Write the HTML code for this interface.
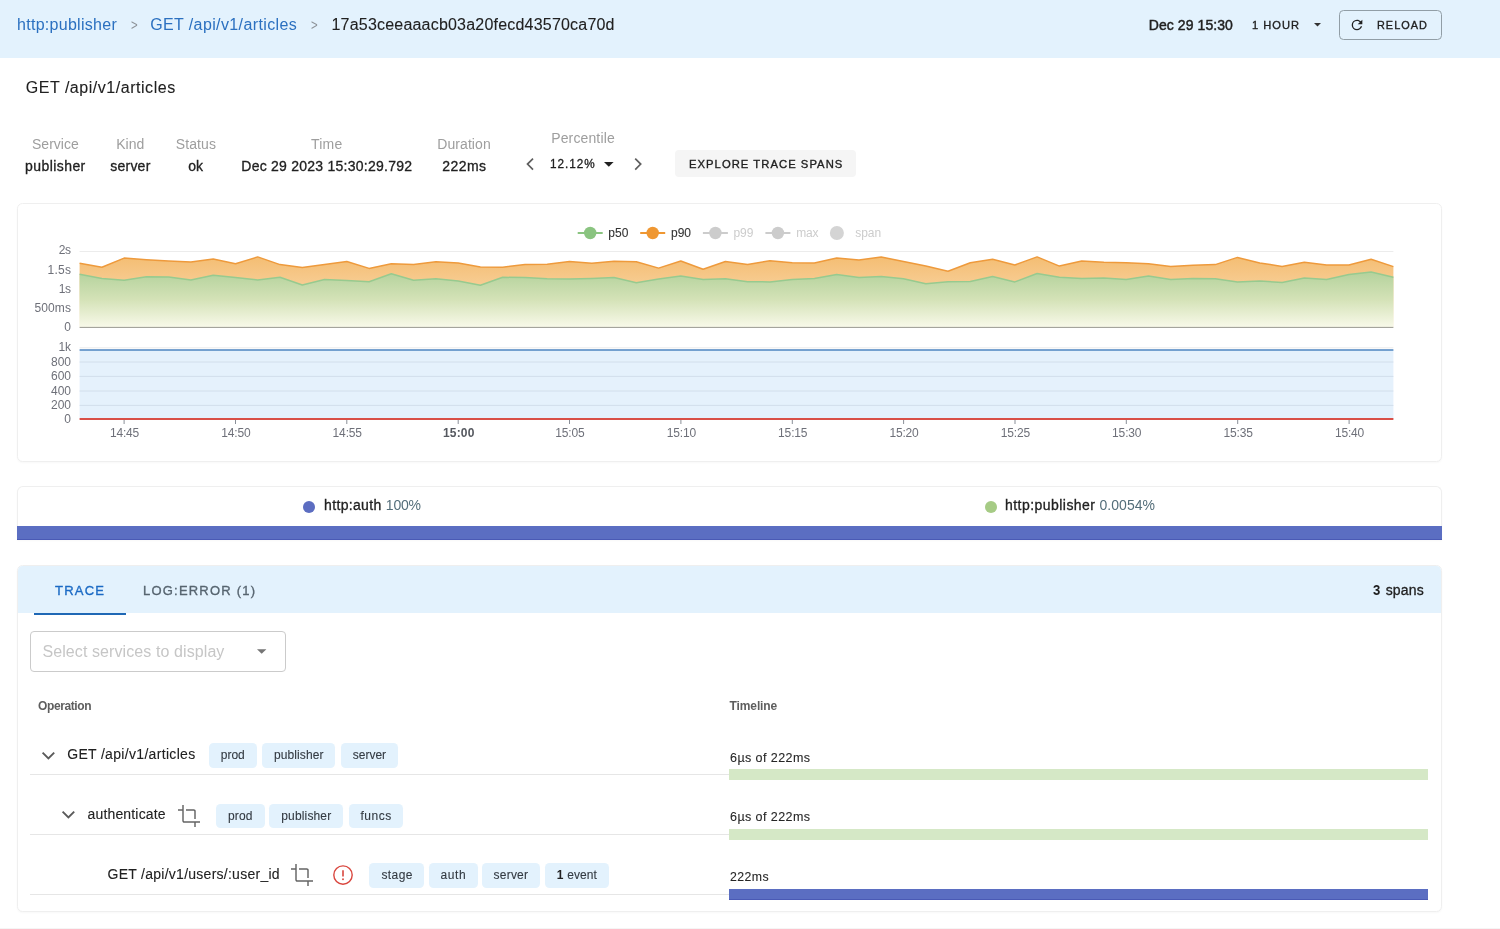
<!DOCTYPE html>
<html lang="en"><head><meta charset="utf-8"><title>Trace</title>
<style>
html,body{margin:0;padding:0;background:#fff;}
body{width:1500px;height:929px;position:relative;overflow:hidden;font-family:"Liberation Sans", sans-serif;}
.t{position:absolute;white-space:pre;}
.abs{position:absolute;}
.card{position:absolute;border:1px solid #efefef;border-radius:5.5px;box-sizing:border-box;background:#fff;box-shadow:0 1px 2px rgba(0,0,0,.03);}
.chip{position:absolute;height:24.7px;border-radius:4.5px;background:#e3f2fd;}
svg{position:absolute;overflow:visible}
</style></head><body><div id="root" style="position:absolute;left:0;top:0;width:1500px;height:929px;will-change:transform">
<div class="abs" style="left:0;top:0;width:1500px;height:57.5px;background:#e3f2fd"></div>
<!-- 1 hour caret -->
<svg style="left:1314.4px;top:23.1px" width="7" height="3.5" viewBox="0 0 10 5"><path d="M0 0h10L5 5z" fill="#333"/></svg>
<!-- reload button -->
<div class="abs" style="left:1339px;top:10px;width:102.5px;height:29.5px;box-sizing:border-box;border:1px solid #919ea6;border-radius:4.5px"></div>
<svg style="left:1349.3px;top:16.5px" width="16" height="16" viewBox="0 0 24 24"><path fill="#212121" d="M17.65,6.35C16.2,4.9 14.21,4 12,4A8,8 0 0,0 4,12A8,8 0 0,0 12,20C15.73,20 18.84,17.45 19.73,14H17.65C16.83,16.33 14.61,18 12,18A6,6 0 0,1 6,12A6,6 0 0,1 12,6C13.66,6 15.14,6.69 16.22,7.78L13,11H20V4L17.65,6.35Z"/></svg>
<!-- percentile chevrons -->
<svg style="left:525.9px;top:157.9px" width="8" height="12" viewBox="0 0 8 12"><path d="M7 0.6L1.5 6.1l5.5 5.5" fill="none" stroke="#5f5f5f" stroke-width="1.7"/></svg>
<svg style="left:633.7px;top:157.9px" width="8" height="12" viewBox="0 0 8 12"><path d="M1.2 0.6l5.5 5.5-5.5 5.5" fill="none" stroke="#5f5f5f" stroke-width="1.7"/></svg>
<svg style="left:604.3px;top:161.9px" width="9.6" height="4.8" viewBox="0 0 10 5"><path d="M0 0h10L5 5z" fill="#212121"/></svg>
<div class="abs" style="left:674.7px;top:150px;width:181.3px;height:27.4px;background:#f5f5f5;border-radius:4px"></div>
<!-- chart card -->
<div class="card" style="left:17px;top:203px;width:1424.5px;height:258.5px"></div>
<svg style="left:0;top:0" width="1500" height="470" viewBox="0 0 1500 470">
<defs><linearGradient id="go" x1="0" y1="256" x2="0" y2="327" gradientUnits="userSpaceOnUse"><stop offset="0" stop-color="#f4bd72"/><stop offset="0.5" stop-color="#f8d09a"/><stop offset="1" stop-color="#fdf1e0"/></linearGradient><linearGradient id="gg" x1="0" y1="272" x2="0" y2="327" gradientUnits="userSpaceOnUse"><stop offset="0" stop-color="#b4d29c"/><stop offset="0.5" stop-color="#d4e2b7"/><stop offset="1" stop-color="#f8f9e9"/></linearGradient></defs>
<path d="M79.6 251.5H1393.4" stroke="#ececec" stroke-width="1"/>
<path d="M79.6 347.8H1393.4" stroke="#ececec" stroke-width="1"/>
<polygon points="79.6,263.3 101.9,267.3 124.1,258.1 146.4,259.7 168.7,261.0 190.9,262.0 213.2,258.9 235.5,263.8 257.7,256.9 280.0,264.6 302.3,267.6 324.5,264.6 346.8,261.5 369.1,268.4 391.3,263.8 413.6,264.6 435.9,261.8 458.2,263.0 480.4,266.9 502.7,267.2 525.0,264.5 547.2,264.3 569.5,261.5 591.8,263.3 614.0,261.2 636.3,261.8 658.6,268.1 680.8,261.0 703.1,269.2 725.4,261.5 747.6,264.4 769.9,260.7 792.2,262.7 814.4,263.0 836.7,258.1 859.0,260.0 881.2,256.9 903.5,261.5 925.8,266.1 948.0,271.2 970.3,262.7 992.6,259.2 1014.8,265.0 1037.1,256.9 1059.4,266.1 1081.7,261.0 1103.9,262.3 1126.2,262.7 1148.5,263.8 1170.7,266.6 1193.0,265.3 1215.3,264.6 1237.5,257.4 1259.8,263.0 1282.1,266.4 1304.3,262.3 1326.6,265.0 1348.9,264.9 1371.1,259.2 1393.4,266.6 1393.4,327.2 79.6,327.2" fill="url(#go)"/>
<polygon points="79.6,274.2 101.9,278.4 124.1,280.2 146.4,276.8 168.7,277.1 190.9,279.9 213.2,275.3 235.5,277.6 257.7,279.9 280.0,277.3 302.3,285.0 324.5,279.6 346.8,280.4 369.1,281.7 391.3,273.8 413.6,280.2 435.9,278.7 458.2,281.1 480.4,285.3 502.7,277.3 525.0,277.6 547.2,278.8 569.5,279.1 591.8,278.4 614.0,277.6 636.3,282.7 658.6,279.1 680.8,276.1 703.1,279.4 725.4,278.8 747.6,281.7 769.9,281.9 792.2,279.4 814.4,278.4 836.7,274.5 859.0,277.6 881.2,276.4 903.5,278.8 925.8,283.7 948.0,281.7 970.3,281.4 992.6,276.4 1014.8,281.9 1037.1,273.5 1059.4,277.3 1081.7,278.4 1103.9,277.9 1126.2,279.6 1148.5,276.1 1170.7,279.4 1193.0,278.4 1215.3,278.8 1237.5,281.9 1259.8,281.1 1282.1,282.5 1304.3,278.1 1326.6,279.6 1348.9,274.5 1371.1,271.9 1393.4,277.3 1393.4,327.2 79.6,327.2" fill="url(#gg)"/>
<polyline points="79.6,263.3 101.9,267.3 124.1,258.1 146.4,259.7 168.7,261.0 190.9,262.0 213.2,258.9 235.5,263.8 257.7,256.9 280.0,264.6 302.3,267.6 324.5,264.6 346.8,261.5 369.1,268.4 391.3,263.8 413.6,264.6 435.9,261.8 458.2,263.0 480.4,266.9 502.7,267.2 525.0,264.5 547.2,264.3 569.5,261.5 591.8,263.3 614.0,261.2 636.3,261.8 658.6,268.1 680.8,261.0 703.1,269.2 725.4,261.5 747.6,264.4 769.9,260.7 792.2,262.7 814.4,263.0 836.7,258.1 859.0,260.0 881.2,256.9 903.5,261.5 925.8,266.1 948.0,271.2 970.3,262.7 992.6,259.2 1014.8,265.0 1037.1,256.9 1059.4,266.1 1081.7,261.0 1103.9,262.3 1126.2,262.7 1148.5,263.8 1170.7,266.6 1193.0,265.3 1215.3,264.6 1237.5,257.4 1259.8,263.0 1282.1,266.4 1304.3,262.3 1326.6,265.0 1348.9,264.9 1371.1,259.2 1393.4,266.6" fill="none" stroke="#ee9a3c" stroke-width="1.5" stroke-linejoin="round"/>
<polyline points="79.6,274.2 101.9,278.4 124.1,280.2 146.4,276.8 168.7,277.1 190.9,279.9 213.2,275.3 235.5,277.6 257.7,279.9 280.0,277.3 302.3,285.0 324.5,279.6 346.8,280.4 369.1,281.7 391.3,273.8 413.6,280.2 435.9,278.7 458.2,281.1 480.4,285.3 502.7,277.3 525.0,277.6 547.2,278.8 569.5,279.1 591.8,278.4 614.0,277.6 636.3,282.7 658.6,279.1 680.8,276.1 703.1,279.4 725.4,278.8 747.6,281.7 769.9,281.9 792.2,279.4 814.4,278.4 836.7,274.5 859.0,277.6 881.2,276.4 903.5,278.8 925.8,283.7 948.0,281.7 970.3,281.4 992.6,276.4 1014.8,281.9 1037.1,273.5 1059.4,277.3 1081.7,278.4 1103.9,277.9 1126.2,279.6 1148.5,276.1 1170.7,279.4 1193.0,278.4 1215.3,278.8 1237.5,281.9 1259.8,281.1 1282.1,282.5 1304.3,278.1 1326.6,279.6 1348.9,274.5 1371.1,271.9 1393.4,277.3" fill="none" stroke="#97ca8f" stroke-width="1.5" stroke-linejoin="round"/>
<path d="M79.6 327.4H1393.4" stroke="#9a9a92" stroke-width="1"/>
<rect x="79.6" y="350" width="1313.8000000000002" height="69" fill="#e5f1fc"/>
<path d="M79.6 362H1393.4" stroke="#d2deeb" stroke-width="1"/>
<path d="M79.6 376.4H1393.4" stroke="#d2deeb" stroke-width="1"/>
<path d="M79.6 391H1393.4" stroke="#d2deeb" stroke-width="1"/>
<path d="M79.6 405.4H1393.4" stroke="#d2deeb" stroke-width="1"/>
<path d="M79.6 350H1393.4" stroke="#4d84c0" stroke-width="1.7"/>
<path d="M79.6 419H1393.4" stroke="#d94f47" stroke-width="2"/>
<path d="M124.1 420V424" stroke="#8a8f98" stroke-width="1"/>
<path d="M235.5 420V424" stroke="#8a8f98" stroke-width="1"/>
<path d="M346.8 420V424" stroke="#8a8f98" stroke-width="1"/>
<path d="M458.2 420V424" stroke="#8a8f98" stroke-width="1"/>
<path d="M569.5 420V424" stroke="#8a8f98" stroke-width="1"/>
<path d="M680.9 420V424" stroke="#8a8f98" stroke-width="1"/>
<path d="M792.3 420V424" stroke="#8a8f98" stroke-width="1"/>
<path d="M903.6 420V424" stroke="#8a8f98" stroke-width="1"/>
<path d="M1015.0 420V424" stroke="#8a8f98" stroke-width="1"/>
<path d="M1126.3 420V424" stroke="#8a8f98" stroke-width="1"/>
<path d="M1237.7 420V424" stroke="#8a8f98" stroke-width="1"/>
<path d="M1349.1 420V424" stroke="#8a8f98" stroke-width="1"/>
<path d="M577.7 233H602.7" stroke="#8ac480" stroke-width="2"/>
<circle cx="590.2" cy="233" r="6.2" fill="#8ac480"/>
<path d="M640.2 233H665.2" stroke="#ef9732" stroke-width="2"/>
<circle cx="652.7" cy="233" r="6.2" fill="#ef9732"/>
<path d="M702.9 233H727.9" stroke="#cccccc" stroke-width="2"/>
<circle cx="715.4" cy="233" r="6.2" fill="#cccccc"/>
<path d="M765.4 233H790.4" stroke="#cccccc" stroke-width="2"/>
<circle cx="777.9" cy="233" r="6.2" fill="#cccccc"/>
<circle cx="836.9" cy="233" r="7" fill="#d4d4d4"/>
</svg>
<!-- card 2 -->
<div class="card" style="left:17px;top:486px;width:1424.5px;height:54px;border-bottom:none;border-radius:6px 6px 0 0"></div>
<div class="abs" style="left:17px;top:526px;width:1424.5px;height:13.7px;background:#5b6ec2;box-shadow:inset 0 -1px 0 #4a5ab5"></div>
<div class="abs" style="left:303.2px;top:500.9px;width:12px;height:12px;border-radius:50%;background:#5c6dc1"></div>
<div class="abs" style="left:984.5px;top:500.9px;width:12px;height:12px;border-radius:50%;background:#a6cb85"></div>
<!-- card 3 -->
<div class="card" style="left:17px;top:565px;width:1424.5px;height:347px;overflow:hidden"><div style="height:47.2px;background:#e3f2fd"></div></div>
<div class="abs" style="left:34px;top:613px;width:92px;height:2px;background:#1f68b5"></div>
<div class="abs" style="left:30px;top:631px;width:256px;height:41px;box-sizing:border-box;border:1px solid #cbcbcb;border-radius:4px"></div>
<svg style="left:257.4px;top:649.4px" width="9.4" height="5" viewBox="0 0 10 5"><path d="M0 0h10L5 5z" fill="#757575"/></svg>
<!-- row dividers -->
<div class="abs" style="left:30px;top:774px;width:699px;height:1px;background:#e6e6e6"></div>
<div class="abs" style="left:30px;top:834px;width:699px;height:1px;background:#e6e6e6"></div>
<div class="abs" style="left:30px;top:893.5px;width:699px;height:1px;background:#e6e6e6"></div>
<!-- chevrons -->
<svg style="left:40.9px;top:750.6px" width="14.8" height="10" viewBox="0 0 14.8 10"><path d="M1.6 1.7l5.8 5.8 5.8-5.8" fill="none" stroke="#5a5a5a" stroke-width="1.9"/></svg>
<svg style="left:61.2px;top:810.2px" width="14.8" height="10" viewBox="0 0 14.8 10"><path d="M1.6 1.7l5.8 5.8 5.8-5.8" fill="none" stroke="#5a5a5a" stroke-width="1.9"/></svg>
<!-- crop icons -->
<svg style="left:177px;top:803.5px" width="24" height="24" viewBox="0 0 24 24"><path fill="none" stroke="#646464" stroke-width="1.45" d="M6 1V16.8a1.2 1.2 0 0 0 1.2 1.2H23M1 6H6M9 6H16.8a1.2 1.2 0 0 1 1.2 1.2V15M18 18V23"/></svg>
<svg style="left:290.3px;top:863.3px" width="24" height="24" viewBox="0 0 24 24"><path fill="none" stroke="#646464" stroke-width="1.45" d="M6 1V16.8a1.2 1.2 0 0 0 1.2 1.2H23M1 6H6M9 6H16.8a1.2 1.2 0 0 1 1.2 1.2V15M18 18V23"/></svg>
<!-- alert -->
<svg style="left:331px;top:863px" width="24" height="24" viewBox="0 0 24 24"><circle cx="12" cy="12.1" r="9.2" fill="none" stroke="#d9463e" stroke-width="1.4"/><path d="M12 7.2V13.4" stroke="#d9463e" stroke-width="1.6" fill="none"/><circle cx="12" cy="16.3" r="0.95" fill="#d9463e"/></svg>
<div class="chip" style="left:208.8px;top:743.3px;width:48.0px"></div>
<div class="chip" style="left:261.9px;top:743.3px;width:73.6px"></div>
<div class="chip" style="left:340.8px;top:743.3px;width:57.3px"></div>
<div class="chip" style="left:216.0px;top:803.6px;width:48.5px"></div>
<div class="chip" style="left:269.3px;top:803.6px;width:73.9px"></div>
<div class="chip" style="left:348.5px;top:803.6px;width:54.7px"></div>
<div class="chip" style="left:369.4px;top:863.4px;width:55.0px"></div>
<div class="chip" style="left:428.5px;top:863.4px;width:49.1px"></div>
<div class="chip" style="left:481.6px;top:863.4px;width:58.4px"></div>
<div class="chip" style="left:544.7px;top:863.4px;width:64.2px"></div>
<!-- timeline bars -->
<div class="abs" style="left:729.4px;top:769.3px;width:699px;height:10.7px;background:#d5e8c6"></div>
<div class="abs" style="left:729.4px;top:829px;width:699px;height:10.9px;background:#d5e8c6"></div>
<div class="abs" style="left:729.4px;top:889.1px;width:699px;height:10.7px;background:#5b6ec2;box-shadow:inset 0 -1px 0 #4a5ab5"></div>
<div class="abs" style="left:0;top:928px;width:1500px;height:1px;background:#f5f5f5"></div>

<span class="t" style="left:17.0px;top:17.0px;font-size:16px;line-height:16px;color:#2b70c0;letter-spacing:0.287px;">http:publisher</span>
<span class="t" style="left:130.6px;top:18.0px;font-size:14px;line-height:14px;color:#8d9298;letter-spacing:0.000px;transform:scaleX(0.8183);transform-origin:0 0;">&gt;</span>
<span class="t" style="left:150.2px;top:17.0px;font-size:16px;line-height:16px;color:#2b70c0;letter-spacing:0.384px;">GET /api/v1/articles</span>
<span class="t" style="left:311.1px;top:18.0px;font-size:14px;line-height:14px;color:#8d9298;letter-spacing:0.000px;transform:scaleX(0.8183);transform-origin:0 0;">&gt;</span>
<span class="t" style="left:331.5px;top:17.0px;font-size:16px;line-height:16px;color:#212121;letter-spacing:0.203px;-webkit-text-stroke:0.1px #212121;">17a53ceeaaacb03a20fecd43570ca70d</span>
<span class="t" style="left:1148.7px;top:18.0px;font-size:14px;line-height:14px;color:#212121;letter-spacing:0.082px;-webkit-text-stroke:0.45px #212121;">Dec 29 15:30</span>
<span class="t" style="left:1252.1px;top:19.0px;font-size:11.6px;line-height:11.6px;color:#212121;letter-spacing:1.070px;-webkit-text-stroke:0.35px #212121;transform:scaleX(0.9580);transform-origin:0 0;">1 HOUR</span>
<span class="t" style="left:1376.8px;top:19.0px;font-size:11.6px;line-height:11.6px;color:#212121;letter-spacing:1.070px;-webkit-text-stroke:0.35px #212121;transform:scaleX(0.9390);transform-origin:0 0;">RELOAD</span>
<span class="t" style="left:25.7px;top:80.0px;font-size:16px;line-height:16px;color:#212121;letter-spacing:0.536px;-webkit-text-stroke:0.1px #212121;">GET /api/v1/articles</span>
<span class="t" style="left:32.0px;top:137.0px;font-size:14px;line-height:14px;color:#9e9e9e;letter-spacing:0.002px;">Service</span>
<span class="t" style="left:25.0px;top:159.0px;font-size:14px;line-height:14px;color:#212121;letter-spacing:0.434px;-webkit-text-stroke:0.3px #212121;">publisher</span>
<span class="t" style="left:116.3px;top:137.0px;font-size:14px;line-height:14px;color:#9e9e9e;letter-spacing:-0.010px;">Kind</span>
<span class="t" style="left:110.3px;top:159.0px;font-size:14px;line-height:14px;color:#212121;letter-spacing:0.219px;-webkit-text-stroke:0.3px #212121;">server</span>
<span class="t" style="left:175.7px;top:137.0px;font-size:14px;line-height:14px;color:#9e9e9e;letter-spacing:0.119px;">Status</span>
<span class="t" style="left:188.3px;top:159.0px;font-size:14px;line-height:14px;color:#212121;letter-spacing:-0.097px;-webkit-text-stroke:0.3px #212121;">ok</span>
<span class="t" style="left:311.0px;top:137.0px;font-size:14px;line-height:14px;color:#9e9e9e;letter-spacing:0.235px;">Time</span>
<span class="t" style="left:241.3px;top:159.0px;font-size:14px;line-height:14px;color:#212121;letter-spacing:0.246px;-webkit-text-stroke:0.3px #212121;">Dec 29 2023 15:30:29.792</span>
<span class="t" style="left:437.3px;top:137.0px;font-size:14px;line-height:14px;color:#9e9e9e;letter-spacing:0.068px;">Duration</span>
<span class="t" style="left:442.3px;top:159.0px;font-size:14px;line-height:14px;color:#212121;letter-spacing:0.417px;-webkit-text-stroke:0.3px #212121;">222ms</span>
<span class="t" style="left:551.2px;top:131.0px;font-size:14px;line-height:14px;color:#9e9e9e;letter-spacing:0.137px;">Percentile</span>
<span class="t" style="left:550.4px;top:158.0px;font-size:12px;line-height:12px;color:#212121;letter-spacing:1.000px;-webkit-text-stroke:0.3px #212121;transform:scaleX(0.9781);transform-origin:0 0;">12.12%</span>
<span class="t" style="left:688.8px;top:158.0px;font-size:11.6px;line-height:11.6px;color:#212121;letter-spacing:1.070px;-webkit-text-stroke:0.35px #212121;transform:scaleX(0.9702);transform-origin:0 0;">EXPLORE TRACE SPANS</span>
<span class="t" style="left:608.3px;top:227.0px;font-size:12px;line-height:12px;color:#333;letter-spacing:0.084px;-webkit-text-stroke:0.1px #333;">p50</span>
<span class="t" style="left:671.1px;top:227.0px;font-size:12px;line-height:12px;color:#333;letter-spacing:-0.066px;-webkit-text-stroke:0.1px #333;">p90</span>
<span class="t" style="left:733.5px;top:227.0px;font-size:12px;line-height:12px;color:#ccc;letter-spacing:-0.066px;">p99</span>
<span class="t" style="left:796.3px;top:227.0px;font-size:12px;line-height:12px;color:#ccc;letter-spacing:-0.236px;">max</span>
<span class="t" style="left:855.2px;top:227.0px;font-size:12px;line-height:12px;color:#ccc;letter-spacing:-0.044px;">span</span>
<span class="t" style="left:58.8px;top:244.0px;font-size:12px;line-height:12px;color:#6e7079;letter-spacing:-0.487px;">2s</span>
<span class="t" style="left:47.5px;top:264.0px;font-size:12px;line-height:12px;color:#6e7079;letter-spacing:0.271px;">1.5s</span>
<span class="t" style="left:58.8px;top:283.0px;font-size:12px;line-height:12px;color:#6e7079;letter-spacing:-0.487px;">1s</span>
<span class="t" style="left:34.4px;top:302.0px;font-size:12px;line-height:12px;color:#6e7079;letter-spacing:0.142px;">500ms</span>
<span class="t" style="left:64.3px;top:321.0px;font-size:12px;line-height:12px;color:#6e7079;letter-spacing:0.000px;">0</span>
<span class="t" style="left:58.5px;top:341.0px;font-size:12px;line-height:12px;color:#6e7079;letter-spacing:-0.188px;">1k</span>
<span class="t" style="left:51.0px;top:356.0px;font-size:12px;line-height:12px;color:#6e7079;letter-spacing:-0.016px;">800</span>
<span class="t" style="left:51.0px;top:370.0px;font-size:12px;line-height:12px;color:#6e7079;letter-spacing:-0.016px;">600</span>
<span class="t" style="left:51.0px;top:385.0px;font-size:12px;line-height:12px;color:#6e7079;letter-spacing:-0.016px;">400</span>
<span class="t" style="left:51.0px;top:399.0px;font-size:12px;line-height:12px;color:#6e7079;letter-spacing:-0.016px;">200</span>
<span class="t" style="left:64.3px;top:413.0px;font-size:12px;line-height:12px;color:#6e7079;letter-spacing:0.000px;">0</span>
<span class="t" style="left:109.9px;top:427.0px;font-size:12px;line-height:12px;color:#6e7079;letter-spacing:-0.158px;">14:45</span>
<span class="t" style="left:221.3px;top:427.0px;font-size:12px;line-height:12px;color:#6e7079;letter-spacing:-0.158px;">14:50</span>
<span class="t" style="left:332.6px;top:427.0px;font-size:12px;line-height:12px;color:#6e7079;letter-spacing:-0.158px;">14:55</span>
<span class="t" style="left:443.0px;top:427.0px;font-size:12px;line-height:12px;color:#55585f;letter-spacing:0.174px;font-weight:700;">15:00</span>
<span class="t" style="left:555.3px;top:427.0px;font-size:12px;line-height:12px;color:#6e7079;letter-spacing:-0.158px;">15:05</span>
<span class="t" style="left:666.7px;top:427.0px;font-size:12px;line-height:12px;color:#6e7079;letter-spacing:-0.158px;">15:10</span>
<span class="t" style="left:778.1px;top:427.0px;font-size:12px;line-height:12px;color:#6e7079;letter-spacing:-0.158px;">15:15</span>
<span class="t" style="left:889.4px;top:427.0px;font-size:12px;line-height:12px;color:#6e7079;letter-spacing:-0.158px;">15:20</span>
<span class="t" style="left:1000.8px;top:427.0px;font-size:12px;line-height:12px;color:#6e7079;letter-spacing:-0.158px;">15:25</span>
<span class="t" style="left:1112.1px;top:427.0px;font-size:12px;line-height:12px;color:#6e7079;letter-spacing:-0.158px;">15:30</span>
<span class="t" style="left:1223.5px;top:427.0px;font-size:12px;line-height:12px;color:#6e7079;letter-spacing:-0.158px;">15:35</span>
<span class="t" style="left:1334.9px;top:427.0px;font-size:12px;line-height:12px;color:#6e7079;letter-spacing:-0.158px;">15:40</span>
<span class="t" style="left:324.1px;top:498.0px;font-size:14px;line-height:14px;color:#212121;letter-spacing:0.325px;-webkit-text-stroke:0.3px #212121;">http:auth</span>
<span class="t" style="left:385.8px;top:498.0px;font-size:14px;line-height:14px;color:#546e7a;letter-spacing:-0.204px;">100%</span>
<span class="t" style="left:1005.0px;top:498.0px;font-size:14px;line-height:14px;color:#212121;letter-spacing:0.457px;-webkit-text-stroke:0.3px #212121;">http:publisher</span>
<span class="t" style="left:1099.5px;top:498.0px;font-size:14px;line-height:14px;color:#546e7a;letter-spacing:0.036px;">0.0054%</span>
<span class="t" style="left:55.0px;top:584.0px;font-size:13.3px;line-height:13.3px;color:#1b6ac4;letter-spacing:1.250px;-webkit-text-stroke:0.35px #1b6ac4;transform:scaleX(0.9785);transform-origin:0 0;">TRACE</span>
<span class="t" style="left:142.6px;top:584.0px;font-size:13.3px;line-height:13.3px;color:#56646f;letter-spacing:1.250px;-webkit-text-stroke:0.35px #56646f;transform:scaleX(0.9760);transform-origin:0 0;">LOG:ERROR (1)</span>
<span class="t" style="left:1372.9px;top:583.0px;font-size:14px;line-height:14px;color:#212121;letter-spacing:0.000px;font-weight:700;transform:scaleX(0.9363);transform-origin:0 0;">3</span>
<span class="t" style="left:1385.7px;top:583.0px;font-size:14px;line-height:14px;color:#212121;letter-spacing:0.185px;-webkit-text-stroke:0.3px #212121;">spans</span>
<span class="t" style="left:42.4px;top:644.0px;font-size:16px;line-height:16px;color:#c6c6c6;letter-spacing:0.094px;">Select services to display</span>
<span class="t" style="left:38.1px;top:700.0px;font-size:12px;line-height:12px;color:#5e5e5e;letter-spacing:-0.409px;font-weight:700;">Operation</span>
<span class="t" style="left:729.6px;top:700.0px;font-size:12px;line-height:12px;color:#5e5e5e;letter-spacing:-0.124px;font-weight:700;">Timeline</span>
<span class="t" style="left:67.2px;top:747.0px;font-size:14px;line-height:14px;color:#212121;letter-spacing:0.321px;-webkit-text-stroke:0.1px #212121;">GET /api/v1/articles</span>
<span class="t" style="left:87.5px;top:807.0px;font-size:14px;line-height:14px;color:#212121;letter-spacing:0.164px;-webkit-text-stroke:0.1px #212121;">authenticate</span>
<span class="t" style="left:107.6px;top:867.0px;font-size:14px;line-height:14px;color:#212121;letter-spacing:0.261px;-webkit-text-stroke:0.1px #212121;">GET /api/v1/users/:user_id</span>
<span class="t" style="left:729.6px;top:752.0px;font-size:12px;line-height:12px;color:#262626;letter-spacing:0.400px;-webkit-text-stroke:0.1px #262626;transform:scaleX(1.0433);transform-origin:0 0;">6µs of 222ms</span>
<span class="t" style="left:729.6px;top:811.0px;font-size:12px;line-height:12px;color:#262626;letter-spacing:0.400px;-webkit-text-stroke:0.1px #262626;transform:scaleX(1.0433);transform-origin:0 0;">6µs of 222ms</span>
<span class="t" style="left:729.6px;top:871.0px;font-size:12px;line-height:12px;color:#262626;letter-spacing:0.400px;-webkit-text-stroke:0.1px #262626;transform:scaleX(1.0257);transform-origin:0 0;">222ms</span>
<span class="t" style="left:220.8px;top:749.0px;font-size:12px;line-height:12px;color:#333a42;letter-spacing:-0.010px;-webkit-text-stroke:0.1px #333a42;">prod</span>
<span class="t" style="left:273.9px;top:749.0px;font-size:12px;line-height:12px;color:#333a42;letter-spacing:0.112px;-webkit-text-stroke:0.1px #333a42;">publisher</span>
<span class="t" style="left:352.8px;top:749.0px;font-size:12px;line-height:12px;color:#333a42;letter-spacing:-0.009px;-webkit-text-stroke:0.1px #333a42;">server</span>
<span class="t" style="left:228.0px;top:810.0px;font-size:12px;line-height:12px;color:#333a42;letter-spacing:0.156px;-webkit-text-stroke:0.1px #333a42;">prod</span>
<span class="t" style="left:281.3px;top:810.0px;font-size:12px;line-height:12px;color:#333a42;letter-spacing:0.150px;-webkit-text-stroke:0.1px #333a42;">publisher</span>
<span class="t" style="left:360.5px;top:810.0px;font-size:12px;line-height:12px;color:#333a42;letter-spacing:0.503px;-webkit-text-stroke:0.1px #333a42;">funcs</span>
<span class="t" style="left:381.4px;top:869.0px;font-size:12px;line-height:12px;color:#333a42;letter-spacing:0.410px;-webkit-text-stroke:0.1px #333a42;">stage</span>
<span class="t" style="left:440.5px;top:869.0px;font-size:12px;line-height:12px;color:#333a42;letter-spacing:0.580px;-webkit-text-stroke:0.1px #333a42;">auth</span>
<span class="t" style="left:493.6px;top:869.0px;font-size:12px;line-height:12px;color:#333a42;letter-spacing:0.211px;-webkit-text-stroke:0.1px #333a42;">server</span>
<span class="t" style="left:556.7px;top:869.0px;font-size:12px;line-height:12px;color:#212121;letter-spacing:0.000px;font-weight:700;">1</span>
<span class="t" style="left:567.2px;top:869.0px;font-size:12px;line-height:12px;color:#333a42;letter-spacing:0.085px;-webkit-text-stroke:0.1px #333a42;">event</span>
</div></body></html>
